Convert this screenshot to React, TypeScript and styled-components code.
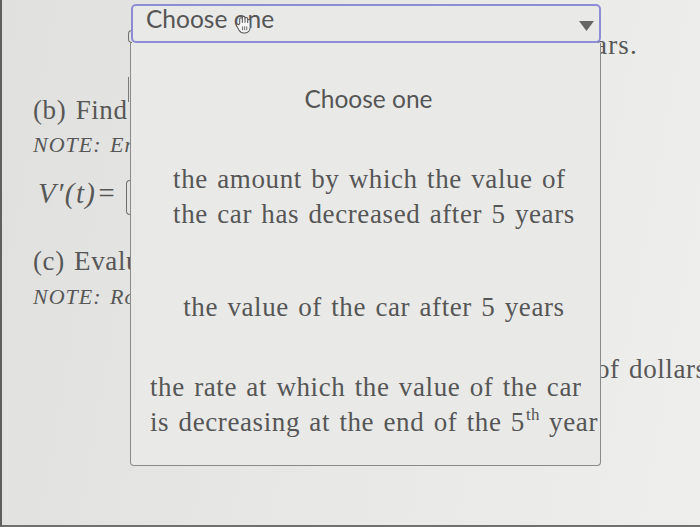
import React from "react";
import styled, { createGlobalStyle } from "styled-components";

const Global = createGlobalStyle`
  html, body { margin: 0; padding: 0; }
  body { width: 700px; height: 527px; overflow: hidden; background: #e6e7e5; }
`;

const Frame = styled.div`
  position: relative;
  width: 700px;
  height: 527px;
  box-sizing: border-box;
  border-left: 2px solid #5f5f5f;
  border-bottom: 2px solid #707070;
  background: linear-gradient(100deg, #e0e1de 0%, #e7e8e6 45%, #eeeeec 100%);
  overflow: hidden;
  font-family: "Liberation Serif", "Times New Roman", serif;
  color: #575757;
`;

const Worksheet = styled.div`
  display: flex;
  flex-direction: column;
  padding-left: 31px;
  font-size: 27px;
  letter-spacing: 0.6px;
  word-spacing: 2px;
`;

const Row = styled.div<{ $gap: number; $h?: number }>`
  margin-top: ${(p) => p.$gap}px;
  height: ${(p) => p.$h ?? 30}px;
  line-height: ${(p) => p.$h ?? 30}px;
  white-space: nowrap;
`;

const NoteRow = styled(Row)`
  font-style: italic;
  font-size: 22px;
  letter-spacing: 1px;
`;

const EndRow = styled.div<{ $gap: number }>`
  margin-top: ${(p) => p.$gap}px;
  height: 30px;
  line-height: 30px;
  white-space: nowrap;
  display: flex;
  justify-content: space-between;
  align-items: flex-start;
  padding: 0 62px 0 95px;
`;

const EndText = styled.span`
  letter-spacing: 1.2px;
`;

const SplitRow = styled.div<{ $gap: number }>`
  margin-top: ${(p) => p.$gap}px;
  height: 30px;
  line-height: 30px;
  white-space: nowrap;
  padding-left: 563px;
`;

const LabelRow = styled.div<{ $gap: number }>`
  margin-top: ${(p) => p.$gap}px;
  height: 40px;
  line-height: 40px;
  display: grid;
  grid-template-columns: 93px 4px;
  align-items: start;
  white-space: nowrap;
`;

const MathLabel = styled.span`
  font-style: italic;
  font-size: 29px;
  letter-spacing: 1.4px;
  padding-left: 5px;
`;

const InputBox = styled.span<{ $h: number; $mt: number }>`
  display: block;
  height: ${(p) => p.$h}px;
  margin-top: ${(p) => p.$mt}px;
  box-sizing: border-box;
  border: 1.5px solid #707070;
  border-right: none;
  border-radius: 4px 0 0 4px;
`;

const SmallBox = styled(InputBox)`
  width: 4px;
`;

const TickRow = styled.div`
  height: 34px;
  padding-left: 95px;
`;

const Tick = styled.div`
  width: 1px;
  height: 25px;
  margin-top: 17px;
  background: #7a7a7a;
`;

const Select = styled.div`
  position: absolute;
  left: 129px;
  top: 4px;
  width: 470px;
  height: 39px;
  box-sizing: border-box;
  border: 2px solid #8e8cd6;
  border-radius: 5px;
  background: #e9e9e8;
  display: flex;
  align-items: flex-start;
  justify-content: space-between;
  padding: 0 5px 0 13px;
  font-family: Lato, "Open Sans", sans-serif;
  font-size: 24.5px;
  line-height: 25px;
  color: #555;
  z-index: 2;
`;

const Caret = styled.svg`
  align-self: center;
  width: 15px;
  height: 10px;
  margin-top: 4px;
`;

const Cursor = styled.svg`
  position: absolute;
  left: 233px;
  top: 16px;
  width: 17px;
  height: 18px;
  z-index: 3;
`;

const Panel = styled.div`
  position: absolute;
  left: 128px;
  top: 43px;
  width: 471px;
  height: 423px;
  box-sizing: border-box;
  border: 1px solid #8a8a8a;
  border-top: none;
  border-radius: 0 0 4px 4px;
  background: #e9eae8;
  display: grid;
  grid-template-rows: repeat(4, 1fr);
  z-index: 1;
`;

const Header = styled.div`
  display: flex;
  align-items: center;
  justify-content: center;
  padding: 6px 0 0 6px;
  font-family: Lato, "Open Sans", sans-serif;
  font-size: 24.5px;
  color: #555;
`;

const Option = styled.div<{ $up: number }>`
  display: flex;
  align-items: center;
  justify-content: center;
  padding: ${(p) => (p.$up < 0 ? -p.$up * 2 : 0)}px 0
    ${(p) => (p.$up > 0 ? p.$up * 2 : 0)}px 17px;
  font-size: 27px;
  letter-spacing: 0.6px;
  word-spacing: 2px;
  line-height: 35px;
  color: #565656;
`;

const OptionText = styled.div`
  display: inline-block;
  text-align: left;
  white-space: nowrap;
`;

const Line = styled.div``;

const Sup = styled.sup`
  font-size: 17px;
  letter-spacing: 0.3px;
  vertical-align: 0;
  position: relative;
  top: -11px;
  margin-left: 1px;
`;

export default function App() {
  return (
    <>
      <Global />
      <Frame>
        <Worksheet>
          <EndRow $gap={30}>
            <SmallBox $h={13} $mt={0} />
            <EndText>thousands of dollars.</EndText>
          </EndRow>
          <TickRow>
            <Tick />
          </TickRow>
          <Row $gap={1}>(b) Find</Row>
          <NoteRow $gap={7} $h={26}>NOTE: Enter</NoteRow>
          <LabelRow $gap={15}>
            <MathLabel>V′(t)=</MathLabel>
            <InputBox $h={35} $mt={7} />
          </LabelRow>
          <Row $gap={33}>(c) Evaluate</Row>
          <NoteRow $gap={8} $h={26}>NOTE: Round</NoteRow>
          <SplitRow $gap={44}>of dollars per year.</SplitRow>
        </Worksheet>

        <Select>
          <span>Choose one</span>
          <Caret viewBox="0 0 15 10">
            <path d="M0 0 H15 L7.5 10 Z" fill="#666" />
          </Caret>
        </Select>
        <Cursor viewBox="0 0 16 19">
          <path
            d="M4 8 V3.2 a1.4 1.4 0 0 1 2.8 0 V7 V2 a1.4 1.4 0 0 1 2.8 0 V7 V3 a1.4 1.4 0 0 1 2.8 0 V7.5 V5 a1.3 1.3 0 0 1 2.6 0 V12 c0 3.5 -2.4 6 -5.5 6 h-1.5 c-2.4 0 -3.7 -1.4 -4.8 -3.2 L0.8 10.6 a1.3 1.3 0 0 1 2.2 -1.4 Z"
            fill="#f4f4f4"
            stroke="#555"
            strokeWidth="1.1"
          />
          <path d="M7 11 V15 M9.2 11 V15 M11.4 11 V15" stroke="#666" strokeWidth="1" />
        </Cursor>

        <Panel>
          <Header>Choose one</Header>
          <Option $up={4}>
            <OptionText>
              <Line>the amount by which the value of</Line>
              <Line>the car has decreased after 5 years</Line>
            </OptionText>
          </Option>
          <Option $up={-1}>
            <OptionText>
              <Line>the value of the car after 5 years</Line>
            </OptionText>
          </Option>
          <Option $up={6}>
            <OptionText>
              <Line>the rate at which the value of the car</Line>
              <Line>
                is decreasing at the end of the 5<Sup>th</Sup> year
              </Line>
            </OptionText>
          </Option>
        </Panel>
      </Frame>
    </>
  );
}
